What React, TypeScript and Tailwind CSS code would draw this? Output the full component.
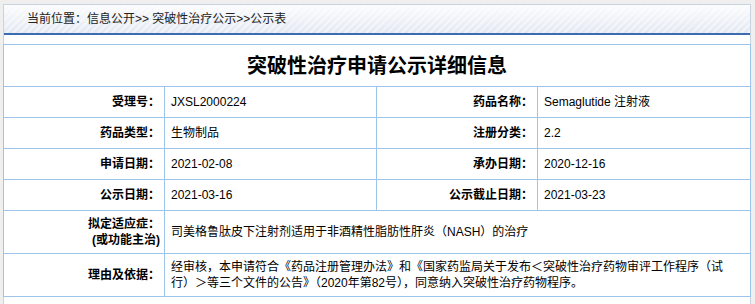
import React from 'react';

const font = "font-['Liberation_Sans','Noto_Sans_CJK_SC',sans-serif]";

const labelCls = 'border border-[#9fc4e9] text-right font-bold pr-[4px] text-black';
const valueCls = 'border border-[#9fc4e9] text-left pl-[6px] text-black';

const rows: [string, string, string, string][] = [
  ['受理号：', 'JXSL2000224', '药品名称：', 'Semaglutide 注射液'],
  ['药品类型：', '生物制品', '注册分类：', '2.2'],
  ['申请日期：', '2021-02-08', '承办日期：', '2020-12-16'],
  ['公示日期：', '2021-03-16', '公示截止日期：', '2021-03-23'],
];

export default function App() {
  return (
    <div className={`min-h-screen bg-[#efefef] pt-[4px] pl-[3px] ${font}`}>
      <div className="w-[748px] h-[300px] bg-white border border-b-0 border-[#c9d3e0]">
        {/* 面包屑 */}
        <div className="h-[30px] flex items-center pl-[23px] border-b-2 border-[#3d6cb3] text-[12px] text-[#222] bg-[image:repeating-linear-gradient(135deg,rgba(255,255,255,0.45)_0px,rgba(255,255,255,0.45)_2px,transparent_2px,transparent_5px),linear-gradient(180deg,#fbfcfe,#e3e8f1)]">
          当前位置：信息公开&gt;&gt; 突破性治疗公示&gt;&gt;公示表
        </div>

        <table className="mt-[9px] -ml-px w-[747px] border-collapse table-fixed text-[12px]">
          <colgroup>
            <col className="w-[161px]" />
            <col className="w-[212px]" />
            <col className="w-[161px]" />
            <col className="w-[213px]" />
          </colgroup>
          <tbody>
            <tr className="h-[42px]">
              <td colSpan={4} className="border border-[#9fc4e9] text-center text-[20px] font-bold text-black">
                突破性治疗申请公示详细信息
              </td>
            </tr>
            {rows.map((r) => (
              <tr key={r[0]} className="h-[31px]">
                <td className={labelCls}>{r[0]}</td>
                <td className={valueCls}>{r[1]}</td>
                <td className={labelCls}>{r[2]}</td>
                <td className={valueCls}>{r[3]}</td>
              </tr>
            ))}
            <tr className="h-[43px]">
              <td className={`${labelCls} leading-[16px]`}>
                拟定适应症：
                <br />
                (或功能主治)
              </td>
              <td colSpan={3} className={valueCls}>
                司美格鲁肽皮下注射剂适用于非酒精性脂肪性肝炎（NASH）的治疗
              </td>
            </tr>
            <tr className="h-[43px]">
              <td className={labelCls}>理由及依据：</td>
              <td colSpan={3} className={`${valueCls} leading-[16px]`}>
                经审核，本申请符合《药品注册管理办法》和《国家药监局关于发布＜突破性治疗药物审评工作程序（试
                <br />
                行）＞等三个文件的公告》（2020年第82号），同意纳入突破性治疗药物程序。
              </td>
            </tr>
          </tbody>
        </table>
      </div>
    </div>
  );
}
